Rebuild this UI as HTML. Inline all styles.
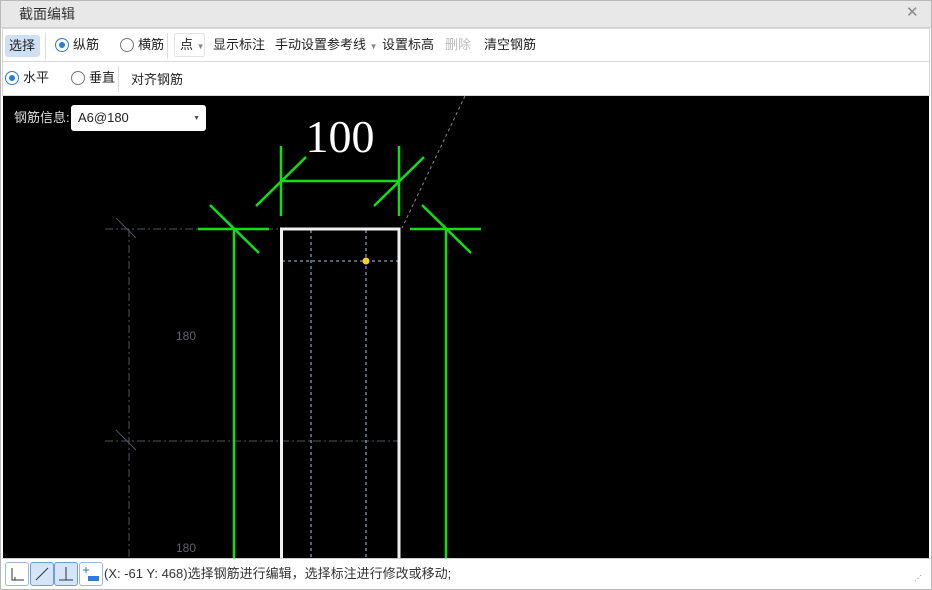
<!DOCTYPE html>
<html><head><meta charset="utf-8"><style>
*{box-sizing:border-box;margin:0;padding:0}
body{width:932px;height:590px;overflow:hidden;background:#fff;font-family:"Liberation Sans","Noto Sans CJK SC",sans-serif;font-size:13px;line-height:16px;color:#222;position:relative}
.frame{position:absolute;left:0;top:0;width:932px;height:590px;border:1px solid #b9b9b9;z-index:5;pointer-events:none}
.title{position:absolute;left:0;top:0;width:932px;height:28px;background:#e8e8e8;border-bottom:1px solid #d0d0d0}
.title span{position:absolute;left:19px;top:6px;font-size:14px;color:#333}
.title .x{left:906px;top:5px;font-size:15px;color:#888}
.bar{position:absolute;left:2px;width:928px;background:#fff;border:1px solid #d8d8d8}
.t{position:absolute;top:0;white-space:nowrap;font-size:13px;line-height:16px}
.radio{position:absolute;width:14px;height:14px;border:1px solid #777;border-radius:50%;background:#fff}
.radio.on{border-color:#2b7bd8}
.radio.on:after{content:"";position:absolute;left:3px;top:3px;width:6px;height:6px;border-radius:50%;background:#2b7bd8}
.sep{position:absolute;width:1px;background:#ddd}
.canvas{position:absolute;left:3px;top:96px;width:926px;height:462px;background:#000}
.status{position:absolute;left:2px;top:558px;width:928px;height:31px;background:#fff;border-top:1px solid #ccc}
.btn{position:absolute;top:3px;width:24px;height:24px;border:1px solid #9bb8e0;border-radius:3px;background:#fff}
.btn.on{background:#d5e4f7;border-color:#6a9de0}
</style></head><body>
<div class="frame"></div>
<div class="title"><span>截面编辑</span><span class="x">✕</span></div>
<div class="bar" style="top:28px;height:34px">
 <div class="t" style="left:2px;top:6px;width:35px;height:22px;background:#cfe0f5;border-radius:3px;padding:3px 0 0 4px">选择</div>
 <div class="sep" style="left:42px;top:4px;height:26px"></div>
 <div class="radio on" style="left:52px;top:9px"></div><div class="t" style="left:70px;top:8px">纵筋</div>
 <div class="radio" style="left:117px;top:9px"></div><div class="t" style="left:135px;top:8px">横筋</div>
 <div class="sep" style="left:164px;top:4px;height:26px"></div>
 <div class="t" style="left:171px;top:4px;width:31px;height:24px;border:1px solid #e3e3e3;border-radius:2px;padding:3px 0 0 5px">点 <span style="font-size:8px;color:#888">▼</span></div>
 <div class="t" style="left:210px;top:8px">显示标注</div>
 <div class="t" style="left:272px;top:8px">手动设置参考线 <span style="font-size:8px;color:#888">▼</span></div>
 <div class="t" style="left:379px;top:8px">设置标高</div>
 <div class="t" style="left:442px;top:8px;color:#bbb">删除</div>
 <div class="t" style="left:481px;top:8px">清空钢筋</div>
</div>
<div class="bar" style="top:62px;height:34px;border-top:none">
 <div class="radio on" style="left:2px;top:9px"></div><div class="t" style="left:20px;top:8px">水平</div>
 <div class="radio" style="left:68px;top:9px"></div><div class="t" style="left:86px;top:8px">垂直</div>
 <div class="sep" style="left:115px;top:4px;height:26px"></div>
 <div class="t" style="left:128px;top:10px">对齐钢筋</div>
</div>
<div class="canvas">
<svg width="926" height="462" viewBox="3 96 926 462" style="position:absolute;left:0;top:0">
 <g stroke="#4a5260" stroke-width="1" stroke-dasharray="8,3,2,3" fill="none">
  <line x1="105" y1="229" x2="300" y2="229"/><line x1="105" y1="441" x2="400" y2="441"/><line x1="129" y1="229" x2="129" y2="558"/>
 </g>
 <g stroke="#4a5260" stroke-width="1"><line x1="116" y1="218" x2="136" y2="238"/><line x1="116" y1="430" x2="136" y2="450"/></g>
 <text x="176" y="340" fill="#5d6370" font-size="12" font-family="Liberation Sans">180</text>
 <text x="176" y="552" fill="#5d6370" font-size="12" font-family="Liberation Sans">180</text>
 <line x1="465" y1="96" x2="402" y2="228" stroke="#888" stroke-dasharray="3,3"/>
 <g stroke="#a8c8f0" stroke-width="1" stroke-dasharray="3,3"><line x1="311" y1="230" x2="311" y2="558"/><line x1="366" y1="230" x2="366" y2="558"/><line x1="282" y1="261" x2="399" y2="261"/></g>
 <rect x="281.5" y="229" width="117.5" height="340" fill="none" stroke="#f0f0f0" stroke-width="3"/>
 <circle cx="366" cy="261" r="3.5" fill="#ffd21f"/>
 <g stroke="#10e010" stroke-width="2.5">
  <line x1="281" y1="146" x2="281" y2="216"/><line x1="399" y1="146" x2="399" y2="216"/><line x1="281" y1="181" x2="399" y2="181"/>
  <line x1="256" y1="206" x2="306" y2="157"/><line x1="374" y1="206" x2="424" y2="157"/>
  <line x1="198" y1="229" x2="269" y2="229"/><line x1="234" y1="229" x2="234" y2="558"/><line x1="210" y1="205" x2="259" y2="253"/>
  <line x1="410" y1="229" x2="481" y2="229"/><line x1="446" y1="229" x2="446" y2="558"/><line x1="422" y1="205" x2="471" y2="253"/>
 </g>
 <text x="340" y="152" fill="#fff" font-size="46" text-anchor="middle" font-family="Liberation Serif">100</text>
</svg>
<div class="t" style="left:11px;top:14px;color:#ddd">钢筋信息:</div>
<div class="t" style="left:68px;top:9px;width:135px;height:26px;background:#fff;border-radius:3px;padding:5px 0 0 7px">A6@180<span style="position:absolute;right:6px;top:6px;font-size:7px;color:#555">▼</span></div>
</div>
<div class="status">
 <div class="btn" style="left:3px"><svg width="22" height="22"><path d="M6 5V17H18" stroke="#333" fill="none"/><path d="M9 14V17" stroke="#333"/></svg></div>
 <div class="btn on" style="left:28px"><svg width="22" height="22"><path d="M5 17L17 5" stroke="#333"/></svg></div>
 <div class="btn on" style="left:52px"><svg width="22" height="22"><path d="M11 4V17M4 17H18" stroke="#333" fill="none"/></svg></div>
 <div class="btn" style="left:77px"><svg width="22" height="22"><path d="M3 7H9M6 4V10" stroke="#2b7bd8"/><rect x="8" y="13" width="11" height="5" fill="#2b7bd8"/></svg></div>
 <div class="t" style="left:102px;top:7px;color:#333">(X: -61 Y: 468)选择钢筋进行编辑，选择标注进行修改或移动;</div>
 <div class="t" style="left:912px;top:12px;font-size:8px;color:#888">⋰</div>
</div>
</body></html>
